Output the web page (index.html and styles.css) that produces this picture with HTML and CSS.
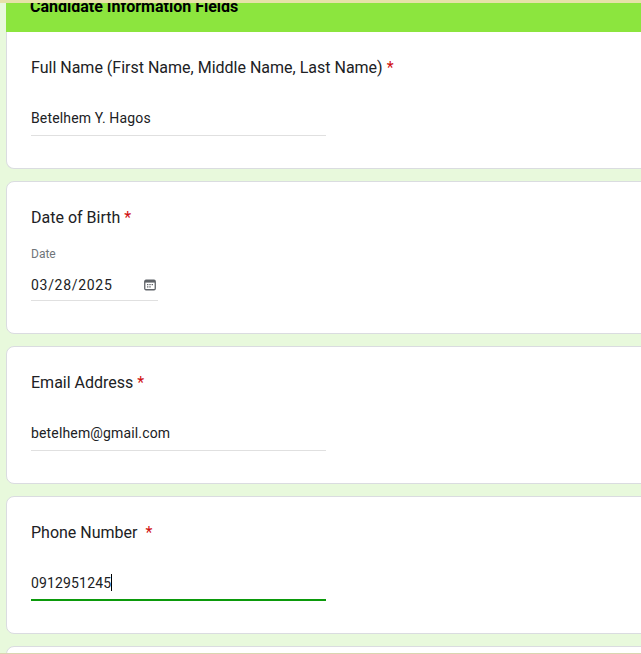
FILE: index.html
```html
<!DOCTYPE html>
<html lang="en">
<head>
    <meta charset="UTF-8">
    <meta name="viewport" content="width=device-width, initial-scale=1.0">
    <title>Candidate Information Fields</title>
    <link rel="stylesheet" href="styles.css">
</head>
<body>
    <div class="top-strip"></div>

    <div class="form">
        <!-- section header, scrolled partly out of view -->
        <div class="section-header">
            <span class="section-title">Candidate Information Fields</span>
        </div>

        <div class="card card-first">
            <div class="question">Full Name (First Name, Middle Name, Last Name) <span class="req">*</span></div>
            <div class="answer">Betelhem Y. Hagos</div>
        </div>

        <div class="card card-date">
            <div class="question">Date of Birth <span class="req">*</span></div>
            <div class="date-label">Date</div>
            <div class="date-input">
                <span class="date-value">03/28/2025</span>
                <svg class="cal-icon" width="12" height="12" viewBox="0 0 12 12">
                    <rect x="0.75" y="1.25" width="10.5" height="9.5" rx="1.2" fill="none" stroke="#5f6368" stroke-width="1.3"/>
                    <rect x="1" y="2" width="10" height="1.6" fill="#5f6368"/>
                    <rect x="3" y="5" width="1.4" height="1.2" fill="#5f6368"/>
                    <rect x="5.3" y="5" width="1.4" height="1.2" fill="#5f6368"/>
                    <rect x="7.6" y="5" width="1.4" height="1.2" fill="#5f6368"/>
                    <rect x="3" y="7.3" width="1.4" height="1.2" fill="#5f6368"/>
                    <rect x="5.3" y="7.3" width="1.4" height="1.2" fill="#5f6368"/>
                </svg>
            </div>
        </div>

        <div class="card">
            <div class="question">Email Address <span class="req">*</span></div>
            <div class="answer">betelhem@gmail.com</div>
        </div>

        <div class="card">
            <div class="question">Phone Number &nbsp;<span class="req">*</span></div>
            <div class="answer answer-focus">0912951245<span class="caret"></span></div>
        </div>

        <div class="card card-next"></div>
    </div>

    <div class="bottom-strip"></div>
</body>
</html>
```

FILE: styles.css
```css
body {
    margin: 0;
    height: 654px;
    overflow: hidden;
    background: #e8f9dc;
    color: #202124;
    font-family: Roboto, Arial, sans-serif;
}

.top-strip {
    height: 3px;
    background: #e6e2a8;
}

.bottom-strip {
    position: fixed;
    left: 0;
    right: 0;
    bottom: 0;
    height: 1px;
    background: #d9d6b0;
}

.form {
    display: flex;
    flex-direction: column;
    gap: 12px;
    margin-left: 6px;
    height: 651px;
    overflow: hidden;
}

/* green bar with the title cut off by the top of the window */
.section-header {
    height: 29px;
    flex: none;
    margin-bottom: -12px;
    padding-left: 24px;
    background: #8ce53e;
    overflow: hidden;
}

.section-title {
    display: block;
    margin-top: -4px;
    font-size: 16px;
    line-height: 16px;
    font-weight: 700;
    color: #000;
}

.card {
    box-sizing: border-box;
    flex: none;
    width: 700px;
    height: 138px;
    padding: 24px 24px 0;
    background: #fff;
    border: 1px solid #dadce0;
    border-radius: 8px;
}

.card-first {
    height: 137px;
    border-top: 0;
    border-radius: 0 0 8px 8px;
}

.card-date {
    height: 153px;
}

.card-next {
    height: 40px;
}

.question {
    font-size: 16px;
    line-height: 24px;
}

.req {
    color: #d01010;
}

.answer {
    box-sizing: border-box;
    width: 295px;
    height: 32px;
    margin-top: 24px;
    padding-top: 4px;
    font-size: 14px;
    line-height: 20px;
    letter-spacing: 0.15px;
    border-bottom: 1px solid #e0e0e0;
}

.answer-focus {
    border-bottom: 2px solid #0b9a0b;
}

.caret {
    display: inline-block;
    width: 1px;
    height: 17px;
    vertical-align: -3px;
    background: #000;
}

.date-label {
    margin-top: 16px;
    font-size: 12px;
    line-height: 16px;
    color: #70757a;
}

.date-input {
    box-sizing: border-box;
    display: flex;
    align-items: center;
    justify-content: space-between;
    width: 127px;
    height: 32px;
    margin-top: 7px;
    padding-right: 2px;
    font-size: 14px;
    letter-spacing: 0.7px;
    border-bottom: 1px solid #e0e0e0;
}

.date-value {
    line-height: 20px;
}
```
